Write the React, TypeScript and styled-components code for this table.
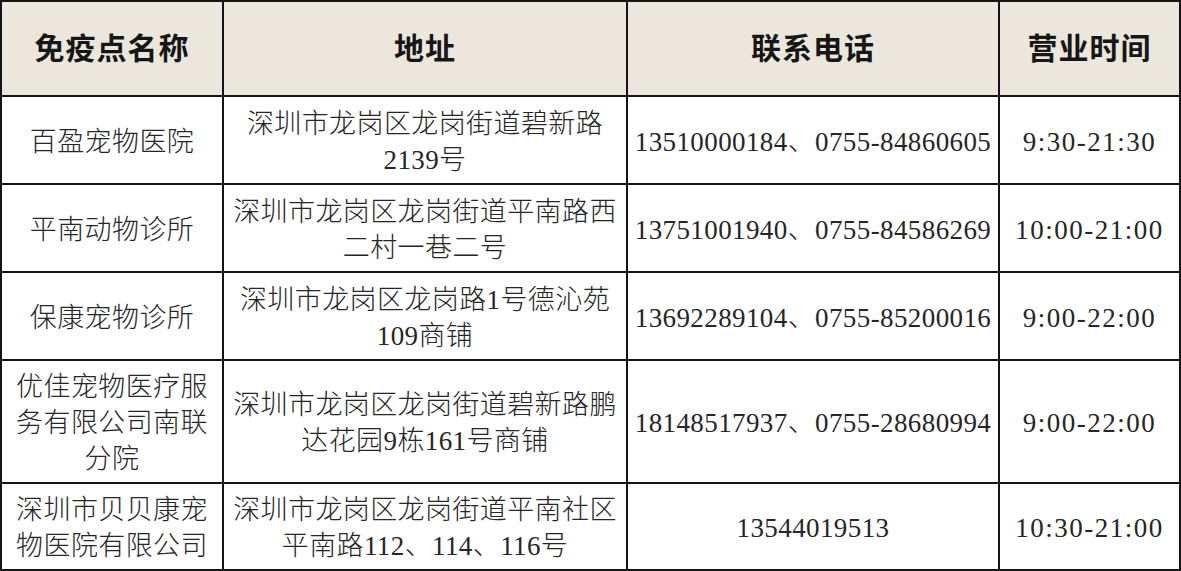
import React from "react";
import styled, { createGlobalStyle } from "styled-components";

const GlobalStyle = createGlobalStyle`
  html, body {
    margin: 0;
    padding: 0;
    background: #ffffff;
  }
`;

const Table = styled.div`
  display: grid;
  grid-template-columns: 222px 404px 372px 181px;
  grid-template-rows: 95px 88px 88px 88px 123px 87px;
  width: 1181px;
  box-sizing: border-box;
  border-top: 2px solid #151515;
  border-left: 2px solid #151515;
  font-family: "Liberation Serif", "Noto Sans CJK SC", serif;
`;

const Cell = styled.div<{ $nowrap?: boolean; $spaced?: boolean }>`
  display: flex;
  align-items: center;
  justify-content: center;
  text-align: center;
  box-sizing: border-box;
  border-right: 2px solid #151515;
  border-bottom: 2px solid #151515;
  padding: 3px 8px 0;
  font-size: 27px;
  font-weight: 300;
  line-height: 36px;
  color: #262626;
  white-space: ${(p) => (p.$nowrap ? "nowrap" : "normal")};
  letter-spacing: ${(p) => (p.$spaced ? "1.5px" : "0.4px")};
`;

const HeadCell = styled(Cell)`
  background: #ebe7dc;
  font-size: 30px;
  font-weight: 700;
  color: #161616;
  letter-spacing: 1px;
  padding-top: 0;
`;

type Row = {
  name: string[];
  address: string[];
  phone: string;
  hours: string;
};

const rows: Row[] = [
  {
    name: ["百盈宠物医院"],
    address: ["深圳市龙岗区龙岗街道碧新路", "2139号"],
    phone: "13510000184、0755-84860605",
    hours: "9:30-21:30",
  },
  {
    name: ["平南动物诊所"],
    address: ["深圳市龙岗区龙岗街道平南路西", "二村一巷二号"],
    phone: "13751001940、0755-84586269",
    hours: "10:00-21:00",
  },
  {
    name: ["保康宠物诊所"],
    address: ["深圳市龙岗区龙岗路1号德沁苑", "109商铺"],
    phone: "13692289104、0755-85200016",
    hours: "9:00-22:00",
  },
  {
    name: ["优佳宠物医疗服", "务有限公司南联", "分院"],
    address: ["深圳市龙岗区龙岗街道碧新路鹏", "达花园9栋161号商铺"],
    phone: "18148517937、0755-28680994",
    hours: "9:00-22:00",
  },
  {
    name: ["深圳市贝贝康宠", "物医院有限公司"],
    address: ["深圳市龙岗区龙岗街道平南社区", "平南路112、114、116号"],
    phone: "13544019513",
    hours: "10:30-21:00",
  },
];

const Lines = ({ lines }: { lines: string[] }) => (
  <span>
    {lines.map((l, i) => (
      <React.Fragment key={i}>
        {i > 0 && <br />}
        {l}
      </React.Fragment>
    ))}
  </span>
);

export default function App() {
  return (
    <>
      <GlobalStyle />
      <Table>
        <HeadCell>免疫点名称</HeadCell>
        <HeadCell>地址</HeadCell>
        <HeadCell>联系电话</HeadCell>
        <HeadCell>营业时间</HeadCell>
        {rows.map((r) => (
          <React.Fragment key={r.phone}>
            <Cell>
              <Lines lines={r.name} />
            </Cell>
            <Cell>
              <Lines lines={r.address} />
            </Cell>
            <Cell $nowrap>{r.phone}</Cell>
            <Cell $nowrap $spaced>
              {r.hours}
            </Cell>
          </React.Fragment>
        ))}
      </Table>
    </>
  );
}
